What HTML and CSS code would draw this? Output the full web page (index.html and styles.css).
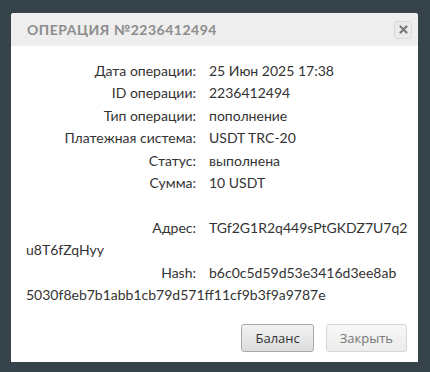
FILE: index.html
```html
<!DOCTYPE html>
<html>

<head>
  <meta name="viewport" content="width=device-width,initial-scale=1">
  <link rel="stylesheet" href="styles.css">
</head>

<body>
  <div class="dialog">
    <div class="dialog-head">
      <span class="dialog-title">Операция №2236412494</span>
      <button class="dialog-close" title="Закрыть">
        <svg width="9" height="9" viewBox="0 0 9 9"><path d="M1.5 1.5L7.5 7.5M7.5 1.5L1.5 7.5" stroke="#777" stroke-width="2.2" stroke-linecap="round"/></svg>
      </button>
    </div>

    <!-- operation details -->
    <div class="dialog-body">
      <div class="row"><span class="label">Дата операции:</span><span class="value">25 Июн 2025 17:38</span></div>
      <div class="row"><span class="label">ID операции:</span><span class="value">2236412494</span></div>
      <div class="row"><span class="label">Тип операции:</span><span class="value">пополнение</span></div>
      <div class="row"><span class="label">Платежная система:</span><span class="value">USDT TRC-20</span></div>
      <div class="row"><span class="label">Статус:</span><span class="value">выполнена</span></div>
      <div class="row"><span class="label">Сумма:</span><span class="value">10 USDT</span></div>
      <div class="row spacer"></div>
      <div class="row long"><span class="label">Адрес:</span><span class="value">TGf2G1R2q449sPtGKDZ7U7q2<wbr>u8T6fZqHyy</span></div>
      <div class="row long"><span class="label">Hash:</span><span class="value">b6c0c5d59d53e3416d3ee8ab<wbr>5030f8eb7b1abb1cb79d571ff11cf9b3f9a9787e</span></div>
    </div>

    <div class="dialog-foot">
      <button class="btn">Баланс</button>
      <button class="btn btn-light">Закрыть</button>
    </div>
  </div>
</body>

</html>
```

FILE: styles.css
```css
body {
  margin: 0;
  background-color: #36434b;
  font-family: "Open Sans", sans-serif;
}

.dialog {
  width: 407px;
  height: 349px;
  margin: 13px 0 0 11px;
  background-color: #fff;
  border-radius: 3px 3px 0 0;
  display: flex;
  flex-direction: column;
}

/* Header */

.dialog-head {
  height: 33px;
  background-color: #eeeeee;
  border-radius: 3px 3px 0 0;
  display: flex;
  align-items: center;
  justify-content: space-between;
  padding: 0 6px 0 16px;
}

.dialog-title {
  font-family: "Lato", sans-serif;
  font-size: 14px;
  font-weight: 700;
  letter-spacing: 0.5px;
  text-transform: uppercase;
  color: #8c8c8c;
}

.dialog-close {
  width: 18px;
  height: 18px;
  padding: 0;
  border: 1px solid #d8d8d8;
  border-radius: 3px;
  background-color: #ebebeb;
  display: flex;
  align-items: center;
  justify-content: center;
  cursor: pointer;
}

/* Body */

.dialog-body {
  flex: 1;
  padding: 14px 8px 0 15px;
  font-family: "Lato", sans-serif;
  font-size: 14px;
  line-height: 22.4px;
  color: #333;
}

.row {
  overflow-wrap: anywhere;
}

.spacer {
  height: 22.4px;
}

.label {
  display: inline-block;
  width: 170px;
  text-align: right;
  margin-right: 13px;
}

/* Footer */

.dialog-foot {
  display: flex;
  justify-content: flex-end;
  gap: 12px;
  padding: 0 11px 10px 0;
}

.btn {
  height: 28px;
  padding: 0 13px;
  font-family: "Open Sans", sans-serif;
  font-size: 13px;
  color: #333;
  border: 1px solid #a9a9a9;
  border-radius: 3px;
  background: linear-gradient(#f2f2f2, #dcdcdc);
  cursor: pointer;
}

.btn-light {
  color: #777;
  border-color: #d6d6d6;
  background: linear-gradient(#f7f7f7, #ececec);
}
```
